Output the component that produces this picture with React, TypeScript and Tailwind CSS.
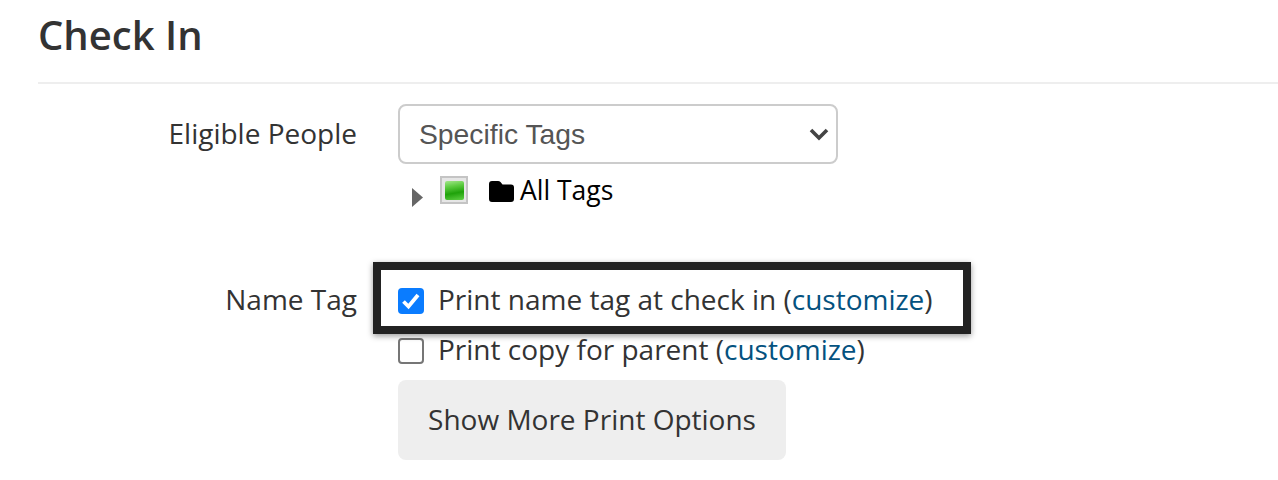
import React from "react";

const font = { fontFamily: '"Open Sans", sans-serif' };

function Check({ checked }: { checked?: boolean }) {
  return checked ? (
    <span className="flex h-[26px] w-[26px] shrink-0 items-center justify-center rounded-[4px] bg-[#0a7cff]">
      <svg width="22" height="22" viewBox="0 0 22 22" fill="none">
        <path d="M3.500 11.500 L8.500 16.500 L18 5" stroke="#fff" strokeWidth="3.800" />
      </svg>
    </span>
  ) : (
    <span className="h-[26px] w-[26px] shrink-0 rounded-[4px] border-2 border-[#767676] bg-white" />
  );
}

export default function App() {
  return (
    <div className="relative h-[480px] w-[1278px] overflow-hidden bg-white pl-[38px] text-[#333]" style={font}>
      <h1 className="h-[82px] pt-[8px] text-[40px] font-semibold leading-[54px] text-[#333]">Check In</h1>
      <div className="h-[2px] bg-[#eeeeee]" />

      <div className="mt-[20px] flex">
        <div className="w-[319px] pt-[9px] text-right text-[28px] leading-[40px]">Eligible People</div>
        <div className="ml-[41px]">
          <div className="flex h-[60px] w-[440px] items-center justify-between rounded-[8px] border-2 border-[#cccccc] bg-white pl-[19px] pr-[7px] font-['Liberation_Sans',sans-serif] text-[28.300px] text-[#555555]">
            <span className="pt-[1px]">Specific Tags</span>
            <svg width="20" height="14" viewBox="0 0 20 14" fill="none">
              <path d="M2 3 L10 11 L18 3" stroke="#444" strokeWidth="3.600" />
            </svg>
          </div>
          <div className="flex h-[54px] items-start pt-[12px]">
            <svg className="ml-[14px] mt-[12px]" width="12" height="19" viewBox="0 0 12 19">
              <path d="M0 0 L11 9.500 L0 19 Z" fill="#666" />
            </svg>
            <span className="ml-[16px] flex h-[28px] w-[28px] items-center justify-center border-2 border-[#c4c4c4] bg-[#e6e6e6]">
              <span className="h-[19px] w-[19px] rounded-[2px] bg-[linear-gradient(170deg,#a4e68c_0%,#5ccb40_30%,#1fa20a_62%,#5fd044_100%)]" />
            </span>
            <svg className="ml-[21px] mt-[5px]" width="25" height="21" viewBox="0 0 25 21">
              <path d="M3 0 H9 Q10.500 0 11.500 1 L13.500 3.500 H22 Q25 3.500 25 6.500 V18 Q25 21 22 21 H3 Q0 21 0 18 V3 Q0 0 3 0 Z" fill="#000" />
            </svg>
            <span className="ml-[6px] -mt-[1px] text-[26.500px] leading-[30px] text-black">All Tags</span>
          </div>
        </div>
      </div>

      <div className="mt-[58px] flex">
        <div className="w-[319px] pt-[3px] text-right text-[28px] leading-[40px]">Name Tag</div>
        <div className="ml-[41px]">
          <div className="flex h-[50px] items-center gap-[14px] text-[28px] leading-[40px]">
            <Check checked />
            <span className="mb-[4px]">Print name tag at check in (<a className="text-[#04527f]">customize</a>)</span>
          </div>
          <div className="flex h-[50px] items-center gap-[14px] text-[28px] leading-[40px]">
            <Check />
            <span className="mb-[4px]">Print copy for parent (<a className="text-[#04527f]">customize</a>)</span>
          </div>
          <button className="mt-[4px] flex h-[80px] w-[388px] items-center justify-center rounded-[8px] bg-[#eeeeee] pb-[2px] text-[28px] text-[#333]">
            Show More Print Options
          </button>
        </div>
      </div>

      <div className="pointer-events-none absolute left-[373px] top-[262px] h-[72px] w-[598px] border-[8px] border-[#222222] shadow-[0_2px_6px_rgba(0,0,0,0.4)]" />
    </div>
  );
}
